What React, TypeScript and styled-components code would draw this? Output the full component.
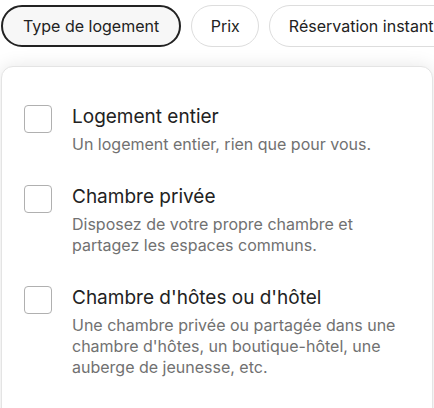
import React, { useState } from 'react';
import styled, { createGlobalStyle } from 'styled-components';

type OptionType = {
  id: string;
  title: string;
  desc: string;
};

const options: OptionType[] = [
  { id: 'entire', title: 'Logement entier', desc: 'Un logement entier, rien que pour vous.' },
  {
    id: 'private',
    title: 'Chambre privée',
    desc: 'Disposez de votre propre chambre et partagez les espaces communs.',
  },
  {
    id: 'hotel',
    title: "Chambre d'hôtes ou d'hôtel",
    desc: "Une chambre privée ou partagée dans une chambre d'hôtes, un boutique-hôtel, une auberge de jeunesse, etc.",
  },
];

const filters = ['Type de logement', 'Prix', 'Réservation instantanée'];

const App = () => {
  const [checked, setChecked] = useState<string[]>([]);

  const toggle = (id: string) => {
    setChecked((prev) => (prev.includes(id) ? prev.filter((el) => el !== id) : [...prev, id]));
  };

  return (
    <>
      <GlobalStyle />
      <S.main>
        <S.filterBar>
          {filters.map((el, i) => (
            <S.pill key={el} $active={i === 0}>
              {el}
            </S.pill>
          ))}
        </S.filterBar>
        <S.panel>
          {options.map((el) => (
            <S.option key={el.id} onClick={() => toggle(el.id)}>
              <S.checkbox $checked={checked.includes(el.id)} />
              <S.textWrapper>
                <S.title>{el.title}</S.title>
                <S.desc>{el.desc}</S.desc>
              </S.textWrapper>
            </S.option>
          ))}
        </S.panel>
      </S.main>
    </>
  );
};

const GlobalStyle = createGlobalStyle`
  body {
    margin: 0;
    background: #ffffff;
    font-family: Inter, "Noto Sans", sans-serif;
    overflow: hidden;
  }
`;

const S = {
  main: styled.main`
    width: 434px;
    height: 408px;
    overflow: hidden;
  `,
  filterBar: styled.div`
    display: flex;
    gap: 10px;
    padding: 5px 0 0 1px;
    white-space: nowrap;
  `,
  pill: styled.button<{ $active: boolean }>`
    flex-shrink: 0;
    height: 42px;
    padding: 0 ${(p) => (p.$active ? '20px' : '18.5px')};
    border-radius: 30px;
    border: ${(p) => (p.$active ? '2px solid #222222' : '1px solid #dddddd')};
    background: ${(p) => (p.$active ? '#f7f7f7' : '#ffffff')};
    color: #222222;
    font-family: inherit;
    font-size: 16px;
    cursor: pointer;
  `,
  panel: styled.div`
    margin: 19px 1px 0 1px;
    height: 400px;
    background: #ffffff;
    border: 1px solid #e4e4e4;
    border-radius: 12px;
    box-shadow: 0 0 18px rgba(0, 0, 0, 0.1);
    padding: 38px 24px 0 22px;
    display: flex;
    flex-direction: column;
    gap: 30px;
  `,
  option: styled.div`
    display: flex;
    align-items: flex-start;
    gap: 20px;
    cursor: pointer;
  `,
  checkbox: styled.div<{ $checked: boolean }>`
    flex-shrink: 0;
    width: 28px;
    height: 28px;
    box-sizing: border-box;
    border: 1px solid #b0b0b0;
    border-radius: 4px;
    background: ${(p) => (p.$checked ? '#222222' : '#ffffff')};
  `,
  textWrapper: styled.div`
    display: flex;
    flex-direction: column;
    gap: 5px;
    max-width: 336px;
  `,
  title: styled.div`
    font-size: 19px;
    line-height: 24px;
    color: #222222;
  `,
  desc: styled.div`
    font-size: 16px;
    line-height: 21px;
    color: #717171;
  `,
};

export default App;
